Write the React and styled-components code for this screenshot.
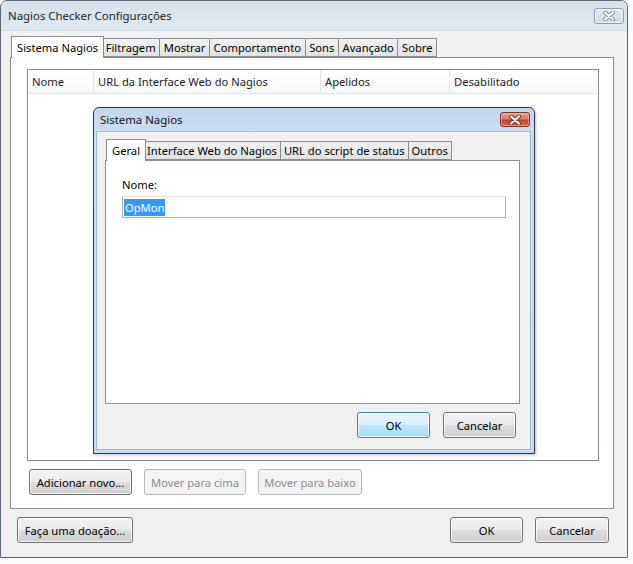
import React from "react";
import styled, { createGlobalStyle } from "styled-components";

const GlobalStyle = createGlobalStyle`
  html, body {
    margin: 0;
    padding: 0;
    background: #ffffff;
  }
  body {
    font-family: "Noto Sans", "Segoe UI", sans-serif;
    font-size: 11.2px;
    color: #000;
  }
  * { box-sizing: border-box; }
`;

const Desktop = styled.div`
  position: relative;
  width: 633px;
  height: 564px;
  overflow: hidden;
  background: #fbfcfd;
`;

const Window = styled.div`
  width: 628px;
  height: 558px;
  border: 1px solid #5d6672;
  border-radius: 7px 7px 0 0;
  background: #f0f0f0;
  display: flex;
  flex-direction: column;
  overflow: hidden;
`;

const TitleBar = styled.div`
  height: 30px;
  flex: none;
  display: flex;
  align-items: center;
  justify-content: space-between;
  padding: 0 3px 0 7px;
  background: linear-gradient(#d5e1ee, #dfe8f2);
  border-bottom: 1px solid #d4dde8;
  font-size: 11.4px;
  color: #1e1e1e;
`;

const CloseBox = styled.div`
  width: 30px;
  height: ${(p) => (p.$red ? "15px" : "16px")};
  border-radius: 3px;
  display: flex;
  align-items: center;
  justify-content: center;
  border: 1px solid ${(p) => (p.$red ? "#7a3324" : "#8e9aa9")};
  background: ${(p) =>
    p.$red
      ? "linear-gradient(#e8a493 0%, #d77a62 45%, #c4452c 55%, #d1654c 100%)"
      : "linear-gradient(#e3eaf2, #cfdae7)"};
  box-shadow: inset 0 0 0 1px ${(p) => (p.$red ? "rgba(255,200,190,0.5)" : "rgba(255,255,255,0.6)")};
`;

const XIcon = ({ dark }) => (
  <svg width="12" height="10" viewBox="0 0 12 10">
    <path d="M2 1.5 L10 8.5 M10 1.5 L2 8.5" stroke={dark ? "#5a3026" : "#7f8a98"} strokeWidth="4" strokeLinecap="round" />
    <path d="M2 1.5 L10 8.5 M10 1.5 L2 8.5" stroke="#ffffff" strokeWidth="2.2" strokeLinecap="round" />
  </svg>
);

const Client = styled.div`
  flex: 1;
  display: flex;
  flex-direction: column;
  padding: 3px 13px 0 9px;
`;

const TabStrip = styled.div`
  display: flex;
  align-items: flex-end;
  padding-left: ${(p) => p.$indent ?? 2}px;
  height: ${(p) => p.$height ?? 22}px;
  position: relative;
  z-index: 1;
`;

const Tab = styled.div`
  height: ${(p) => (p.$active ? "22px" : "19px")};
  padding: 0 ${(p) => (p.$active ? p.$pad + 2 : p.$pad)}px;
  margin: 0 ${(p) => (p.$active ? "-2px" : "0")} ${(p) => (p.$active ? "-1px" : "0")};
  border: 1px solid #898c95;
  border-bottom: ${(p) => (p.$active ? "none" : "1px solid #898c95")};
  border-left-width: ${(p) => (p.$first || p.$active ? "1px" : "0")};
  background: ${(p) => (p.$active ? "#ffffff" : "linear-gradient(#f2f2f2, #e2e2e2)")};
  display: flex;
  align-items: center;
  white-space: nowrap;
  position: relative;
  z-index: ${(p) => (p.$active ? 2 : 1)};
`;

const TabPanel = styled.div`
  background: #ffffff;
  border: 1px solid #898c95;
  display: flex;
  flex-direction: column;
`;

const MainPanel = styled(TabPanel)`
  height: 452px;
  padding: 11px 14px 13px 16px;
`;

const ListView = styled.div`
  flex: 1;
  border: 1px solid #828790;
  background: #ffffff;
`;

const HeaderRow = styled.div`
  display: flex;
  height: 24px;
  background: linear-gradient(#ffffff, #f7f8f9);
  border-bottom: 1px solid #e5e5e5;
`;

const HeaderCell = styled.div`
  width: ${(p) => (p.$w ? `${p.$w}px` : "auto")};
  flex: ${(p) => (p.$w ? "none" : "1")};
  padding-left: 4px;
  display: flex;
  align-items: center;
  border-right: ${(p) => (p.$w ? "1px solid #e5e5e5" : "none")};
  color: #1c1c1c;
`;

const ButtonRow = styled.div`
  display: flex;
  gap: ${(p) => p.$gap ?? 12}px;
  margin-top: ${(p) => p.$top ?? 8}px;
  padding-left: ${(p) => p.$left ?? 0}px;
`;

const Button = styled.div`
  width: ${(p) => p.$w}px;
  height: 26px;
  border-radius: 3px;
  display: flex;
  align-items: center;
  justify-content: center;
  white-space: nowrap;
  border: 1px solid ${(p) => (p.$disabled ? "#b5b8bb" : p.$focused ? "#3c7fb1" : "#707070")};
  color: ${(p) => (p.$disabled ? "#8b8b8b" : "#000")};
  background: ${(p) =>
    p.$disabled
      ? "#f4f4f4"
      : p.$focused
      ? "linear-gradient(#eaf6fd 0%, #d9f0fc 50%, #bee6fd 51%, #a7d9f5 100%)"
      : "linear-gradient(#f2f2f2 0%, #ebebeb 50%, #dddddd 51%, #cfcfcf 100%)"};
  box-shadow: ${(p) => (p.$disabled ? "none" : "inset 0 0 0 1px rgba(255,255,255,0.75)")};
`;

const Footer = styled.div`
  display: flex;
  align-items: center;
  margin-top: 8px;
  padding: 0 5px 0 7px;
`;

const Spacer = styled.div`
  flex: 1;
`;

const Dialog = styled.div`
  position: absolute;
  left: 93px;
  top: 107px;
  width: 442px;
  height: 347px;
  border: 1px solid #2f3844;
  border-radius: 6px 6px 0 0;
  background: linear-gradient(#c3d6ec, #cddff2 30px, #c6dbef);
  display: flex;
  flex-direction: column;
  box-shadow: 1px 1px 3px rgba(0, 0, 0, 0.25);
`;

const DialogTitle = styled.div`
  height: 23px;
  flex: none;
  display: flex;
  align-items: center;
  justify-content: space-between;
  padding: 0 4px 0 6px;
  font-size: 11.4px;
  color: #111;
`;

const DialogBody = styled.div`
  flex: 1;
  margin: 0 3px 3px 2px;
  background: #f0f0f0;
  border: 1px solid #9fb6cf;
  display: flex;
  flex-direction: column;
  padding: 6px 10px 0 8px;
`;

const InnerPanel = styled(TabPanel)`
  height: 244px;
  padding: 15px 13px 0 16px;
`;

const Label = styled.div`
  height: 16px;
  display: flex;
  align-items: center;
  margin-bottom: 4px;
`;

const TextField = styled.div`
  height: 22px;
  border: 1px solid #abadb3;
  border-top-color: #e2e3ea;
  border-radius: 1px;
  background: #fff;
  display: flex;
  align-items: center;
  padding-left: 1px;
`;

const Selected = styled.span`
  background: #3399ff;
  color: #fff;
  padding: 1px 1px;
`;

const DialogButtons = styled.div`
  display: flex;
  justify-content: flex-end;
  gap: 13px;
  margin-top: 8px;
  padding-right: 4px;
`;

const mainTabs = ["Sistema Nagios", "Filtragem", "Mostrar", "Comportamento", "Sons", "Avançado", "Sobre"];
const innerTabs = ["Geral", "Interface Web do Nagios", "URL do script de status", "Outros"];

export default function App() {
  return (
    <Desktop>
      <GlobalStyle />
      <Window>
        <TitleBar>
          <span>Nagios Checker Configurações</span>
          <CloseBox>
            <XIcon />
          </CloseBox>
        </TitleBar>
        <Client>
          <TabStrip $indent={3} $height={23}>
            {mainTabs.map((t, i) => (
              <Tab key={t} $active={i === 0} $first={i === 0} $pad={i === 0 ? 3 : 3.6}>
                {t}
              </Tab>
            ))}
          </TabStrip>
          <MainPanel>
            <ListView>
              <HeaderRow>
                <HeaderCell $w={66}>Nome</HeaderCell>
                <HeaderCell $w={227}>URL da Interface Web do Nagios</HeaderCell>
                <HeaderCell $w={129}>Apelidos</HeaderCell>
                <HeaderCell>Desabilitado</HeaderCell>
              </HeaderRow>
            </ListView>
            <ButtonRow $left={2}>
              <Button $w={103}>Adicionar novo...</Button>
              <Button $w={102} $disabled>Mover para cima</Button>
              <Button $w={104} $disabled>Mover para baixo</Button>
            </ButtonRow>
          </MainPanel>
          <Footer>
            <Button $w={116}>Faça uma doação...</Button>
            <Spacer />
            <ButtonRow $top={0} $gap={12}>
              <Button $w={73}>OK</Button>
              <Button $w={74}>Cancelar</Button>
            </ButtonRow>
          </Footer>
        </Client>
      </Window>

      <Dialog>
        <DialogTitle>
          <span>Sistema Nagios</span>
          <CloseBox $red>
            <XIcon dark />
          </CloseBox>
        </DialogTitle>
        <DialogBody>
          <TabStrip $indent={3} $height={22}>
            {innerTabs.map((t, i) => (
              <Tab key={t} $active={i === 0} $first={i === 0} $pad={3}>
                {t}
              </Tab>
            ))}
          </TabStrip>
          <InnerPanel>
            <Label>Nome:</Label>
            <TextField>
              <Selected>OpMon</Selected>
            </TextField>
          </InnerPanel>
          <DialogButtons>
            <Button $w={73} $focused>OK</Button>
            <Button $w={73}>Cancelar</Button>
          </DialogButtons>
        </DialogBody>
      </Dialog>
    </Desktop>
  );
}
